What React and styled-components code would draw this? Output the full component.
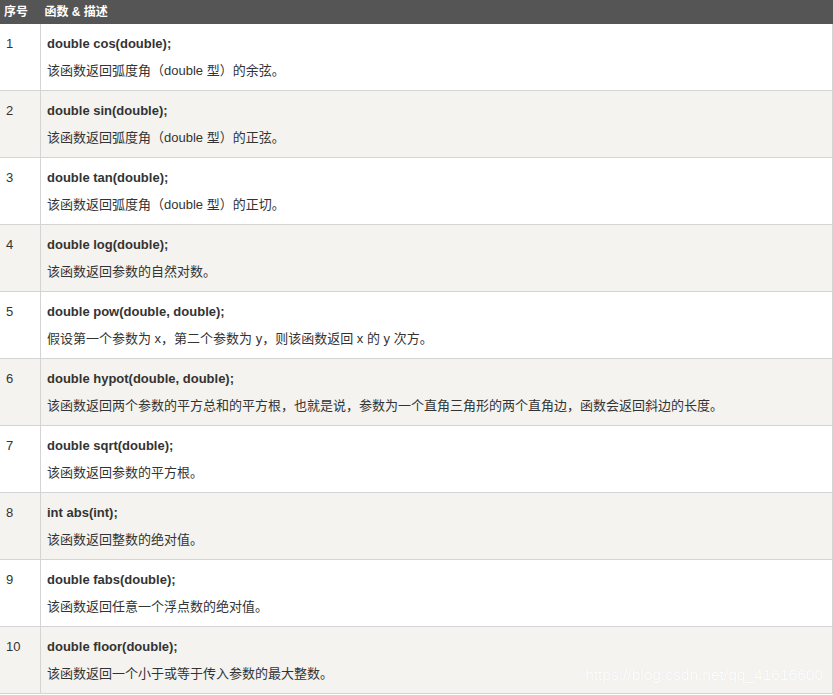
import React from 'react';
import styled, {createGlobalStyle} from "styled-components";

const GlobalStyle = createGlobalStyle`
  html, body {
    margin: 0;
    padding: 0;
    background: #fff;
  }
`;

const Wrap = styled.div`
  position: relative;
  width: 833px;
  font-family: 'Liberation Sans', 'Noto Sans CJK SC', sans-serif;
  color: #333;
`;

const Table = styled.table`
  width: 100%;
  border-collapse: collapse;
  font-size: 13px;

  thead th {
    background-color: #555;
    color: #fff;
    font-size: 12px;
    font-weight: 700;
    text-align: left;
    height: 24px;
    padding: 0 4px;
    line-height: 24px;
  }

  tbody tr {
    border-bottom: 1px solid #d4d4d4;
    &:nth-child(even) {
      background-color: #f4f3f0;
    }
  }

  tbody td {
    vertical-align: top;
    padding: 6px;
    line-height: 27px;
    &:first-child {
      width: 28px;
      border-right: 1px solid #d4d4d4;
    }
    &:last-child {
      border-right: 1px solid #d4d4d4;
    }
  }
`;

const Fn = styled.b`
  display: block;
  font-weight: 700;
`;

const Watermark = styled.div`
  position: absolute;
  right: 10px;
  bottom: 10px;
  font-size: 15.5px;
  color: rgba(255, 255, 255, 0.95);
  text-shadow: 0 0 1px rgba(0, 0, 0, 0.08);
`;

const rows = [
    ['double cos(double);', '该函数返回弧度角（double 型）的余弦。'],
    ['double sin(double);', '该函数返回弧度角（double 型）的正弦。'],
    ['double tan(double);', '该函数返回弧度角（double 型）的正切。'],
    ['double log(double);', '该函数返回参数的自然对数。'],
    ['double pow(double, double);', '假设第一个参数为 x，第二个参数为 y，则该函数返回 x 的 y 次方。'],
    ['double hypot(double, double);', '该函数返回两个参数的平方总和的平方根，也就是说，参数为一个直角三角形的两个直角边，函数会返回斜边的长度。'],
    ['double sqrt(double);', '该函数返回参数的平方根。'],
    ['int abs(int);', '该函数返回整数的绝对值。'],
    ['double fabs(double);', '该函数返回任意一个浮点数的绝对值。'],
    ['double floor(double);', '该函数返回一个小于或等于传入参数的最大整数。'],
];

const App = () => (
    <Wrap>
        <GlobalStyle/>
        <Table>
            <thead>
            <tr>
                <th>序号</th>
                <th>函数 &amp; 描述</th>
            </tr>
            </thead>
            <tbody>
            {rows.map(([fn, desc], i) => (
                <tr key={i}>
                    <td>{i + 1}</td>
                    <td><Fn>{fn}</Fn>{desc}</td>
                </tr>
            ))}
            </tbody>
        </Table>
        <Watermark>https://blog.csdn.net/qq_41616600</Watermark>
    </Wrap>
);

export default App;
